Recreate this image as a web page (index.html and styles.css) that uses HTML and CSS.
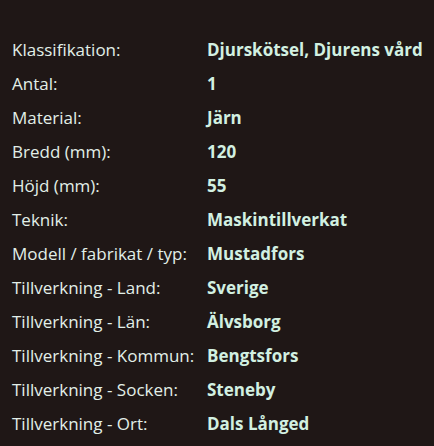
FILE: index.html
```html
<!DOCTYPE html>
<html lang="sv">
<head>
<meta charset="utf-8">
<link rel="stylesheet" href="styles.css">
</head>
<body>
<dl class="facts">
  <dt>Klassifikation:</dt><dd>Djurskötsel, Djurens vård</dd>
  <dt>Antal:</dt><dd>1</dd>
  <dt>Material:</dt><dd>Järn</dd>
  <dt>Bredd (mm):</dt><dd>120</dd>
  <dt>Höjd (mm):</dt><dd>55</dd>
  <dt>Teknik:</dt><dd>Maskintillverkat</dd>
  <dt>Modell / fabrikat / typ:</dt><dd>Mustadfors</dd>
  <dt>Tillverkning - Land:</dt><dd>Sverige</dd>
  <dt>Tillverkning - Län:</dt><dd>Älvsborg</dd>
  <dt>Tillverkning - Kommun:</dt><dd>Bengtsfors</dd>
  <dt>Tillverkning - Socken:</dt><dd>Steneby</dd>
  <dt>Tillverkning - Ort:</dt><dd>Dals Långed</dd>
</dl>
</body>
</html>
```
FILE: styles.css
```css
html, body {
  margin: 0;
  padding: 0;
  background: #1f1716;
}
body {
  width: 434px;
  height: 446px;
  overflow: hidden;
  font-family: "Open Sans", "Noto Sans", sans-serif;
  color: #e2efe8;
}
.facts {
  margin: 0;
  padding: 32px 0 0 12px;
  display: grid;
  grid-template-columns: 195px 1fr;
  grid-auto-rows: 34px;
  align-items: center;
  font-size: 17px;
}
.facts dt {
  font-weight: 400;
  white-space: nowrap;
}
.facts dd {
  margin: 0;
  font-weight: 700;
  white-space: nowrap;
  color: #d2f0e1;
}
```
